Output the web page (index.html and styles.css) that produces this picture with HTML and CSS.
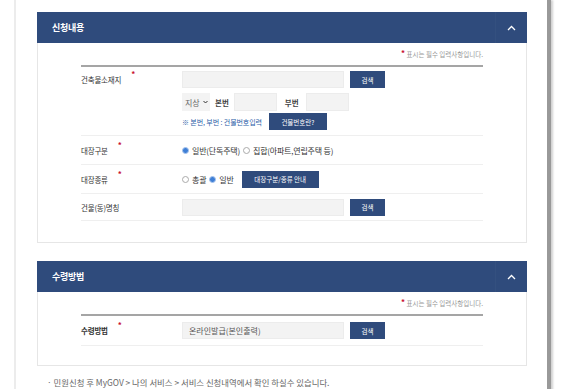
FILE: index.html
```html
<!DOCTYPE html>
<html>
<head>
    <meta charset="utf-8">
    <title>건축물대장 발급 신청</title>
    <link rel="stylesheet" href="styles.css">
</head>
<body>
    <div class="page">
        <section class="panel">
            <header class="panel-head">
                <h2>신청내용</h2>
                <span class="toggle">
                    <svg width="9" height="6" viewBox="0 0 9 6"><polyline points="1,5 4.5,1.5 8,5" fill="none" stroke="#fff" stroke-width="1.3"/></svg>
                </span>
            </header>
            <div class="panel-body">
                <p class="req-note"><span class="dot">*</span> 표시는 필수 입력사항입니다.</p>
                <div class="form">
                    <div class="row row-addr">
                        <div class="label">건축물소재지<span class="dot">*</span></div>
                        <div class="field field-stack">
                            <div class="line">
                                <span class="input wide"></span>
                                <button type="button" class="btn">검색</button>
                            </div>
                            <div class="line line-num">
                                <span class="select">지상 <svg width="5" height="4" viewBox="0 0 5 4"><polyline points="0.5,1 2.5,3 4.5,1" fill="none" stroke="#333" stroke-width="1"/></svg></span>
                                <span class="sub-label">본번</span>
                                <span class="input short"></span>
                                <span class="sub-label sub-gap">부번</span>
                                <span class="input short"></span>
                            </div>
                            <div class="line">
                                <span class="hint">※ 본번, 부번 : 건물번호입력</span>
                                <button type="button" class="btn btn-num">건물번호란?</button>
                            </div>
                        </div>
                    </div>
                    <div class="row row-mid">
                        <div class="label">대장구분<span class="dot">*</span></div>
                        <div class="field radios">
                            <span class="radio on"></span>일반(단독주택)<span class="radio"></span>집합(아파트,연립주택 등)
                        </div>
                    </div>
                    <div class="row row-mid">
                        <div class="label">대장종류<span class="dot">*</span></div>
                        <div class="field radios">
                            <span class="radio"></span>총괄 <span class="radio on"></span>일반
                            <button type="button" class="btn btn-guide">대장구분/종류 안내</button>
                        </div>
                    </div>
                    <div class="row row-last">
                        <div class="label">건물(동)명칭</div>
                        <div class="field">
                            <span class="input wide"></span>
                            <button type="button" class="btn">검색</button>
                        </div>
                    </div>
                </div>
            </div>
        </section>

        <section class="panel panel-second">
            <header class="panel-head">
                <h2>수령방법</h2>
                <span class="toggle">
                    <svg width="9" height="6" viewBox="0 0 9 6"><polyline points="1,5 4.5,1.5 8,5" fill="none" stroke="#fff" stroke-width="1.3"/></svg>
                </span>
            </header>
            <div class="panel-body body-short">
                <p class="req-note"><span class="dot">*</span> 표시는 필수 입력사항입니다.</p>
                <div class="form">
                    <div class="row row-recv">
                        <div class="label">수령방법<span class="dot">*</span></div>
                        <div class="field">
                            <span class="input wide value">온라인발급(본인출력)</span>
                            <button type="button" class="btn">검색</button>
                        </div>
                    </div>
                </div>
            </div>
        </section>

        <p class="footer-note">· 민원신청 후 MyGOV &gt; 나의 서비스 &gt; 서비스 신청내역에서 확인 하실수 있습니다.</p>
    </div>
</body>
</html>
```

FILE: styles.css
```css
html, body {margin: 0; padding: 0; background: #fff;}
body {
    font-family: "Noto Sans CJK KR", "Noto Sans", sans-serif;
    font-size: 7.5px;
    color: #333;
}
.page {
    margin-left: 14px;
    width: 510px;
    height: 389px;
    padding: 12px 0 0 21px;
    border-left: 2px solid #ececec;
    border-right: 4px solid #999;
    box-shadow: 2px 0 2px #d0d0d0;
    box-sizing: content-box;
    overflow: hidden;
}

.panel {
    width: 490px;
    border: 1px solid #e6e6e6;
    border-top: none;
    box-sizing: border-box;
}
.panel-second {margin-top: 18px;}

.panel-head {
    display: flex;
    align-items: center;
    justify-content: space-between;
    height: 31px;
    margin: 0 -1px;
    background: #2f4b7c;
}
.panel-head h2 {
    margin: 0 0 0 15px;
    font-size: 9px;
    font-weight: bold;
    color: #fff;
    letter-spacing: -0.3px;
}
.toggle {
    display: flex;
    align-items: center;
    justify-content: center;
    width: 31px;
    height: 31px;
    border-left: 1px solid #34507f;
}

.panel-body {padding: 0 43px 21px 43px;}
.body-short {padding-bottom: 19px;}

.req-note {
    margin: 0;
    padding-top: 5px;
    height: 10px;
    line-height: 10px;
    text-align: right;
    font-size: 6.5px;
    color: #999;
}
.dot {
    color: #c8102e;
    font-size: 8px;
    font-weight: bold;
}
.req-note .dot {vertical-align: 1px;}

.form {
    margin-top: 7px;
    border-top: 2px solid #a5a5a5;
}

.row {
    display: flex;
    border-bottom: 1px solid #efefef;
}
.row-addr {
    align-items: flex-start;
    padding: 4px 0 5px 0;
}
.row-mid {
    align-items: center;
    height: 28px;
}
.row-last {
    align-items: center;
    height: 26px;
}
.row-recv {
    align-items: center;
    height: 29px;
}

.label {
    width: 101px;
    flex: none;
    line-height: 17px;
    letter-spacing: -0.2px;
    color: #333;
}
.label .dot {
    position: relative;
    top: -6px;
    margin-left: 10px;
}
.row-recv .label {font-weight: bold;}

.field {
    display: flex;
    align-items: center;
    white-space: nowrap;
}
.field-stack {
    flex-direction: column;
    align-items: flex-start;
}
.line {
    display: flex;
    align-items: center;
    height: 17px;
}
.line-num {
    height: 18px;
    margin: 5px 0 2px 0;
}

.input {
    display: inline-block;
    height: 17px;
    background: #f3f3f3;
    border: 1px solid #ececec;
    box-sizing: border-box;
}
.input.wide {width: 162px;}
.input.short {width: 43px; height: 18px;}
.input.value {
    line-height: 15px;
    padding-left: 6px;
    font-size: 8px;
    color: #555;
}

.select {
    display: inline-flex;
    align-items: center;
    gap: 3px;
    width: 28px;
    height: 18px;
    padding-left: 3px;
    box-sizing: border-box;
    background: #f3f3f3;
    color: #666;
    font-size: 8px;
}
.sub-label {
    margin: 0 5px 0 5px;
    font-weight: bold;
    color: #444;
}
.sub-gap {margin-left: 8px; margin-right: 7px;}

.btn {
    flex: none;
    height: 17px;
    padding: 0;
    border: none;
    background: #2f4b7c;
    color: #fff;
    font-family: inherit;
    font-size: 6.5px;
    white-space: nowrap;
    cursor: pointer;
}
.field .btn, .line .btn {margin-left: 6px; width: 35px;}
.line .btn-num {margin-left: 7px; width: 58px;}
.field .btn-guide {margin-left: 8px; width: 77px;}

.hint {
    color: #2b5ea8;
    font-size: 7px;
    letter-spacing: -0.1px;
}

.radios {color: #333; font-size: 8px; letter-spacing: -0.2px;}
.radio {
    display: inline-block;
    flex: none;
    width: 5px;
    height: 5px;
    margin-right: 3px;
    border: 1px solid #aaa;
    border-radius: 50%;
    background: #fff;
}
.radio.on {
    background: #3f7fd6;
    border-color: #a9c6ee;
}
.radios .radio:not(:first-child) {margin-left: 3px;}

.footer-note {
    margin: 11px 0 0 10px;
    font-size: 8.4px;
    line-height: 10px;
    color: #666;
    letter-spacing: 0;
}
```
